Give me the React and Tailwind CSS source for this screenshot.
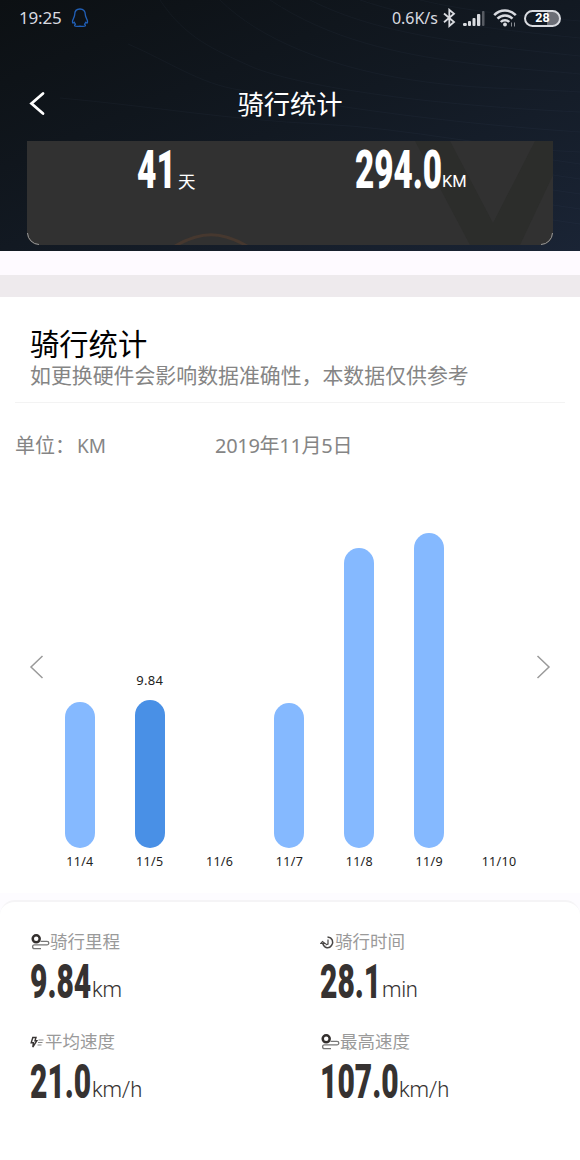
import React from "react";

const days = [
  { label: "11/4", height: 146 },
  { label: "11/5", height: 148.5, value: "9.84" },
  { label: "11/6", height: 0 },
  { label: "11/7", height: 145 },
  { label: "11/8", height: 300.5 },
  { label: "11/9", height: 315.5 },
  { label: "11/10", height: 0 },
];

function Digits({ children, width, scale, className }) {
  return (
    <span className={`block shrink-0 ${className}`} style={{ width }}>
      <span className="block w-max origin-left font-[Roboto,sans-serif] font-black" style={{ transform: `scaleX(${scale})` }}>
        {children}
      </span>
    </span>
  );
}

function StatusBar() {
  return (
    <div className="flex h-9 items-center pl-[19px] pr-[19px] text-[#d9dbe0]">
      <span className="w-[50px] font-['Noto_Sans',sans-serif] text-[17px] leading-9 tracking-[-0.2px]">19:25</span>
      <svg className="ml-[2px] h-[20px] w-[18px]" viewBox="0 0 18 20" fill="none" stroke="#2160b8" strokeWidth="1.3" strokeLinejoin="round">
        <path d="M9 1C5.6 1 3.700 3.300 3.700 6.600 3.600 8.400 2.600 10 1.800 12c-.6 1.500-.3 3 .3 3 .5 0 .9-.5 1.200-.9.2.9.6 1.600 1.200 2.200-.9.500-1.200 1.200-.7 1.600.6.600 3.700.5 5.200.2 1.500.3 4.600.4 5.200-.2.5-.4.2-1.100-.7-1.600.6-.6 1-1.300 1.200-2.200.3.400.7.9 1.200.9.6 0 .9-1.500.3-3-.8-2-1.800-3.600-1.900-5.400C14.300 3.300 12.400 1 9 1Z" />
      </svg>
      <span className="ml-auto font-['Noto_Sans',sans-serif] text-[16px] leading-9">0.6K/s</span>
      <svg className="ml-[5px] h-[20px] w-[13px]" viewBox="0 0 13 20" fill="none" stroke="currentColor" strokeWidth="1.800">
        <path d="M1 5.500 11 14 6.300 18V1.800L11 5.800 1 14.300" />
      </svg>
      <svg className="ml-[7px] h-[18px] w-[22px]" viewBox="0 0 22 18" fill="currentColor">
        <rect x="0" y="14" width="3.800" height="3" rx="1.200" />
        <rect x="5" y="12" width="3" height="5" rx="1" />
        <rect x="9.500" y="9" width="3" height="8" rx="1" />
        <rect x="14" y="5" width="3.300" height="12" rx="1" />
        <rect x="19" y="2" width="2.500" height="15" rx="1" opacity="0.35" />
      </svg>
      <svg className="ml-[8px] h-[20px] w-[24px]" viewBox="0 0 24 20" fill="none" stroke="currentColor" strokeWidth="2.500">
        <path d="M1.200 7.200C7 1 17 1 22.800 7.200M4.500 10.700c4.200-4.300 10.800-4.300 15 0M7.800 14c2.300-2.500 6.100-2.500 8.400 0" />
        <circle cx="12" cy="16.500" r="1.900" fill="currentColor" stroke="none" />
        <path d="M18.500 14.500v4M21.500 14.500v4" strokeWidth="1" opacity="0.6" />
      </svg>
      <span className="ml-[7px] flex h-[17px] w-[37px] items-center justify-center rounded-full border-2 border-[#d9dbe0] bg-linear-to-r from-transparent from-65% to-[#6b6e76] to-65% font-[Roboto,sans-serif] text-[12.500px] font-bold leading-none text-white">
        28
      </span>
    </div>
  );
}

function Header() {
  return (
    <header className="relative h-[251px] bg-linear-to-br from-[#0c1013] via-[#121922] to-[#1a2435]">
      <svg className="absolute inset-0 h-full w-full" viewBox="0 0 580 251" fill="none" stroke="#6f8cab" strokeOpacity="0.05">
        <path d="M128 44C170 62 200 84 240 90S400 120 580 132M160 0C185 38 215 50 250 66S400 104 580 112M220 0C260 40 330 66 400 78S520 88 580 92M270 0C330 40 400 54 460 62S540 70 580 74M310 0C370 30 440 42 580 56M360 0C420 20 480 28 580 38M420 0C470 12 520 16 580 21M60 98C150 106 230 120 320 124S500 150 580 152M553 160l27 4M553 175l27 4M553 190l27 4M553 205l27 4M553 220l27 4" />
      </svg>
      <div className="relative flex h-full flex-col">
        <StatusBar />
        <div className="grid h-[105px] grid-cols-[58px_1fr_58px] items-center pb-[3px] pt-[32px]">
          <svg className="ml-[28px] h-[26px] w-[18px]" viewBox="0 0 18 26" fill="none" stroke="#fff" strokeWidth="2.800" strokeLinecap="round">
            <path d="M15 3.500 3.500 13.500 15 23.500" />
          </svg>
          <h1 className="text-center text-[26.300px] font-normal leading-none text-white">骑行统计</h1>
        </div>
        <div className="relative mx-[27px] h-[104px] rounded-b-[12px] bg-[#313131]">
          <svg className="absolute inset-0 h-full w-full" viewBox="0 0 526 104" fill="none">
            <path d="M388 0h35l43 82L508 0h18v34L493 104h-50Z" fill="#2c2d2b" />
            <path d="M148 105C174 90 194 90 220 105" stroke="#46382f" strokeWidth="3" />
            <path d="M.5 92A12 12 0 0 0 12 103.500M514 103.500A12 12 0 0 0 525.500 92" stroke="#999" strokeWidth="1" />
          </svg>
          <div className="relative grid h-[64px] grid-cols-[328px_1fr] text-white">
            <div className="flex pl-[110px]">
              <Digits className="text-[54px] leading-[57px]" width={41} scale={0.62}>41</Digits>
              <span className="pt-[22px] text-[17.500px] font-normal leading-[36px]">天</span>
            </div>
            <div className="flex">
              <Digits className="text-[54px] leading-[57px]" width={87} scale={0.615}>294.0</Digits>
              <span className="pt-[22px] font-[Roboto,sans-serif] text-[16.500px] font-normal leading-[37px]">KM</span>
            </div>
          </div>
        </div>
      </div>
    </header>
  );
}

function Chart() {
  return (
    <div className="grid h-[414px] grid-cols-[45px_489px_46px]">
      <svg className="ml-[29px] h-[24px] w-[15px] self-center" viewBox="0 0 15 24" fill="none" stroke="#9a9a9a" strokeWidth="1.500">
        <path d="M13.500 1 2 12l11.500 11" />
      </svg>
      <div className="grid grid-cols-7 items-end font-['Noto_Sans',sans-serif] text-[#222]">
        {days.map((day) => (
          <div key={day.label} className="flex flex-col items-center">
            {day.value && <span className="mb-[10px] text-[13px] leading-[20px] tracking-[0.300px]">{day.value}</span>}
            <div className={`w-[30px] rounded-full ${day.value ? "bg-[#4990e6]" : "bg-[#85b9ff]"}`} style={{ height: day.height }} />
            <span className="h-[26px] text-[12.500px] leading-[28px] tracking-[0.300px]">{day.label}</span>
          </div>
        ))}
      </div>
      <svg className="ml-[2px] h-[24px] w-[15px] self-center" viewBox="0 0 15 24" fill="none" stroke="#9a9a9a" strokeWidth="1.500">
        <path d="M1.500 1 13 12 1.500 23" />
      </svg>
    </div>
  );
}

function RouteIcon() {
  return (
    <svg className="h-[16px] w-[20px]" viewBox="0 0 20 16" fill="none">
      <path d="M10.500 7.300h6.500a1.800 1.800 0 0 1 0 3.600H4.500a1.900 1.900 0 0 0 0 3.800H11" stroke="#777" strokeWidth="1.300" />
      <circle cx="6.200" cy="4.800" r="3.500" stroke="#332f2e" strokeWidth="2.500" fill="#fff" />
    </svg>
  );
}

function TimeIcon() {
  return (
    <svg className="h-[16px] w-[15px]" viewBox="0 0 15 16" fill="none" stroke="#4a4746">
      <path d="M7.500 3C12.500 3.500 14 8 11.500 11.500S4.500 14.500 2.700 9.500" strokeWidth="1.500" />
      <path d="M.8 9.500 2.500 7.500 5 9.500ZM8 5.500v4.500l-2.500 1" strokeWidth="1.200" />
    </svg>
  );
}

function SpeedIcon() {
  return (
    <svg className="h-[16px] w-[15px]" viewBox="0 0 15 16" fill="none">
      <path d="M2.800 3.500H6L5 6.800h1.800L2.800 13l.6-4.200H1.200Z" stroke="#393534" strokeWidth="1.400" />
      <path d="M8.500 6h5M8 8.500h4.500M7.500 11h4" stroke="#888" strokeWidth="1" />
    </svg>
  );
}

function Stat({ icon, label, value, width, unit }) {
  return (
    <div className="h-[100px] pl-[30px]">
      <div className="flex h-[24px] items-center text-[17.500px] font-normal leading-[24px] text-[#9a9a9a]">
        {icon}
        <span className="-mt-[2px]">{label}</span>
      </div>
      <div className="flex h-[54px] text-[#363231]">
        <Digits className="text-[48px] leading-[55px]" width={width} scale={0.625}>{value}</Digits>
        <span className="pt-[18px] font-[Roboto,sans-serif] text-[22px] font-[350] leading-[36px] tracking-[-0.300px]">{unit}</span>
      </div>
    </div>
  );
}

export default function App() {
  return (
    <main className="flex h-[1160px] w-[580px] flex-col overflow-hidden bg-white font-['Noto_Sans_CJK_SC',sans-serif]">
      <Header />
      <div className="h-[24px] bg-[#fefaff]" />
      <div className="h-[22px] bg-[#eeeaed]" />
      <section>
        <div className="mx-[15px] h-[106px] border-b border-[#f3f3f3] pl-[15px] pt-[27px]">
          <h2 className="text-[29.300px] font-normal leading-[36px] text-black">骑行统计</h2>
          <p className="text-[20.900px] font-normal leading-[28px] text-[#858585]">如更换硬件会影响数据准确性，本数据仅供参考</p>
        </div>
        <div className="grid h-[57px] grid-cols-[200px_1fr] pl-[15px] pt-[28px] font-['Noto_Sans','Noto_Sans_CJK_SC',sans-serif] text-[20px] font-normal leading-[30px] text-[#858585]">
          <span>单位：<span className="ml-[2px] text-[19px]">KM</span></span>
          <span className="tracking-[-0.300px]">2019年11月5日</span>
        </div>
        <Chart />
      </section>
      <section className="mt-[19px] flex-1 bg-[#fdfcff] pt-[7px]">
        <div className="grid h-full grid-cols-2 content-start rounded-t-[15px] border-t-2 border-[#f5f4f6] bg-white pt-[28px]">
          <Stat icon={<RouteIcon />} label="骑行里程" value="9.84" width={62} unit="km" />
          <Stat icon={<TimeIcon />} label="骑行时间" value="28.1" width={62} unit="min" />
          <Stat icon={<SpeedIcon />} label="平均速度" value="21.0" width={62} unit="km/h" />
          <Stat icon={<RouteIcon />} label="最高速度" value="107.0" width={79} unit="km/h" />
        </div>
      </section>
    </main>
  );
}
